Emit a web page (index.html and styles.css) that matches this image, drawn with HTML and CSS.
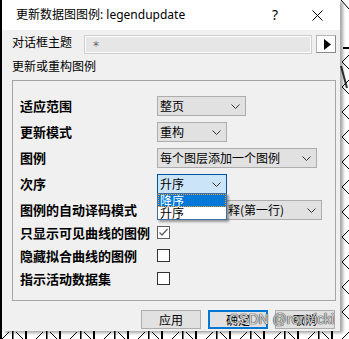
FILE: index.html
```html
<!DOCTYPE html>
<html lang="zh-CN">
<head>
<meta charset="utf-8">
<title>更新数据图图例</title>
<link rel="stylesheet" href="styles.css">
</head>
<body>
<svg class="desk" width="349" height="339" viewBox="0 0 349 339">
  <defs>
    <pattern id="hatch" x="12" y="331" width="34" height="8" patternUnits="userSpaceOnUse">
      <line x1="0.5" y1="0" x2="0.5" y2="8" stroke="#000" stroke-width="2"/>
      <line x1="4" y1="1" x2="11" y2="8" stroke="#000" stroke-width="1"/>
      <line x1="24" y1="8" x2="31" y2="1" stroke="#000" stroke-width="1"/>
      <line x1="14" y1="0" x2="14" y2="8" stroke="#000" stroke-width="2"/>
    </pattern>
  </defs>
  <rect x="0" y="0" width="2" height="339" fill="#000"/>
  <rect x="0" y="331" width="349" height="8" fill="url(#hatch)"/>
  <line x1="343" y1="48" x2="349" y2="48" stroke="#000" stroke-width="2"/>
  <path d="M341 0 L349 9" stroke="#000" fill="none"/>
  <path d="M341 66 L347 88" stroke="#333" stroke-width="2" fill="none"/>
  <path d="M349 55 L342 62 L349 69 M349 80 L342 87 L349 94 M349 105 L342 112 L349 119 M349 130 L342 137 L349 144 M349 155 L342 162 L349 169 M349 180 L342 187 L349 194 M349 205 L342 212 L349 219 M349 230 L342 237 L349 244 M349 255 L342 262 L349 269 M349 280 L342 287 L349 294 M349 305 L342 312 L349 319" stroke="#000" fill="none"/>
</svg>

<div class="window">
  <div class="titlebar">
    <span class="title">更新数据图图例: legendupdate</span>
    <span class="help">?</span>
    <span class="close">
      <svg width="11" height="11" viewBox="0 0 11 11"><path d="M0.5 0.5 L10.5 10.5 M10.5 0.5 L0.5 10.5" stroke="#000" stroke-width="1" fill="none"/></svg>
    </span>
  </div>

  <div class="content">
    <div class="theme-row">
      <span class="theme-label">对话框主题</span>
      <div class="theme-input">*</div>
      <div class="arrow-btn">
        <svg width="7" height="11" viewBox="0 0 7 11"><path d="M0 0 L7 5.5 L0 11 Z" fill="#000"/></svg>
      </div>
    </div>

    <div class="section-title">更新或重构图例</div>

    <div class="group">
      <div class="combo-rows">
        <div class="row">
          <span class="label">适应范围</span>
          <div class="combo w89"><span>整页</span><svg class="chev" width="9" height="5" viewBox="0 0 9 5"><path d="M0.5 0.5 L4.5 4.5 L8.5 0.5" stroke="#333" fill="none"/></svg></div>
        </div>
        <div class="row">
          <span class="label">更新模式</span>
          <div class="combo w70"><span>重构</span><svg class="chev" width="9" height="5" viewBox="0 0 9 5"><path d="M0.5 0.5 L4.5 4.5 L8.5 0.5" stroke="#333" fill="none"/></svg></div>
        </div>
        <div class="row">
          <span class="label">图例</span>
          <div class="combo w160"><span>每个图层添加一个图例</span><svg class="chev" width="9" height="5" viewBox="0 0 9 5"><path d="M0.5 0.5 L4.5 4.5 L8.5 0.5" stroke="#333" fill="none"/></svg></div>
        </div>
        <div class="row">
          <span class="label">次序</span>
          <div class="combo-wrap">
            <div class="combo w70 focused"><span>升序</span><svg class="chev" width="9" height="5" viewBox="0 0 9 5"><path d="M0.5 0.5 L4.5 4.5 L8.5 0.5" stroke="#333" fill="none"/></svg></div>
            <div class="droplist">
              <div class="item selected">降序</div>
              <div class="item">升序</div>
            </div>
          </div>
        </div>
        <div class="row">
          <span class="label">图例的自动译码模式</span>
          <div class="combo w165 covered"><span>释(第一行)</span><svg class="chev" width="9" height="5" viewBox="0 0 9 5"><path d="M0.5 0.5 L4.5 4.5 L8.5 0.5" stroke="#333" fill="none"/></svg></div>
        </div>
      </div>

      <div class="check-rows">
        <div class="check-row">
          <span class="label">只显示可见曲线的图例</span>
          <span class="checkbox checked"><svg width="11" height="11" viewBox="0 0 11 11"><path d="M1.5 5.5 L4 8 L9.5 2" stroke="#5f5f5f" stroke-width="1.3" fill="none"/></svg></span>
        </div>
        <div class="check-row">
          <span class="label">隐藏拟合曲线的图例</span>
          <span class="checkbox"></span>
        </div>
        <div class="check-row">
          <span class="label">指示活动数据集</span>
          <span class="checkbox"></span>
        </div>
      </div>
    </div>

    <div class="buttons">
      <button class="btn">应用</button>
      <button class="btn default">确定</button>
      <button class="btn">取消</button>
    </div>
  </div>
</div>

<div class="watermark">CSDN @ronvicki</div>
</body>
</html>
```

FILE: styles.css
```css
html, body {
  margin: 0;
}

body {
  width: 349px;
  height: 339px;
  overflow: hidden;
  position: relative;
  background: #fff;
  padding-left: 2px;
  box-sizing: border-box;
  font-family: "Noto Sans CJK SC", sans-serif;
  color: #000;
}

.desk {
  position: absolute;
  left: 0;
  top: 0;
  z-index: 0;
}

.window {
  position: relative;
  z-index: 1;
  width: 338px;
  height: 331px;
  background: #f0f0f0;
  box-shadow: 3px 2px 3px rgba(0, 0, 0, 0.35);
}

.titlebar {
  height: 30px;
  background: #fff;
  display: flex;
  align-items: center;
}

.title {
  flex: 1;
  padding-left: 14px;
  font-family: "Noto Sans", "Noto Sans CJK SC", sans-serif;
  font-size: 12px;
  line-height: 16px;
  white-space: nowrap;
}

.help {
  width: 38px;
  text-align: center;
  font-family: "Noto Sans", sans-serif;
  font-size: 14px;
  line-height: 16px;
}

.close {
  width: 46px;
  display: flex;
  justify-content: center;
  align-items: center;
}

.content {
  padding: 0 4px 0 10px;
}

.theme-row {
  margin-top: 5px;
  height: 19px;
  display: flex;
  align-items: flex-start;
}

.theme-label {
  width: 72px;
  flex: none;
  font-size: 12px;
  line-height: 14px;
}

.theme-input {
  width: 228px;
  height: 19px;
  flex: none;
  box-sizing: border-box;
  border: 1px solid #cfcfcf;
  background: #e6e6e6;
  box-shadow: inset 0 0 0 1px #fbfbfb;
  color: #666;
  font-family: "DejaVu Sans", sans-serif;
  font-size: 12px;
  line-height: 20px;
  padding-left: 8px;
}

.arrow-btn {
  margin-left: 4px;
  width: 20px;
  height: 18px;
  flex: none;
  box-sizing: border-box;
  border: 1px solid #b5b5b5;
  border-right-color: #8a8a8a;
  border-bottom-color: #8a8a8a;
  background: #fcfcfc;
  display: flex;
  align-items: center;
  justify-content: center;
  padding-left: 2px;
}

.section-title {
  margin-top: 5px;
  font-size: 12px;
  line-height: 14px;
}

.group {
  margin-top: 7px;
  border: 1px solid #a5a5a5;
  padding: 15px 0 10px 7px;
}

.combo-rows {
  display: flex;
  flex-direction: column;
  gap: 6px;
}

.row {
  display: flex;
  align-items: center;
  height: 20px;
}

.label {
  width: 137px;
  flex: none;
  font-size: 13px;
  font-weight: 700;
  line-height: 16px;
  white-space: nowrap;
}

.combo {
  height: 20px;
  box-sizing: border-box;
  border: 1px solid #adadad;
  background: #e1e1e1;
  display: flex;
  align-items: center;
  justify-content: space-between;
  padding: 0 5px 0 2px;
  font-size: 12px;
  line-height: 16px;
  white-space: nowrap;
  overflow: hidden;
}

.combo.covered {
  padding-left: 70px;
}

.chev {
  flex: none;
}

.w89 { width: 89px; }
.w70 { width: 70px; }
.w160 { width: 160px; }
.w165 { width: 165px; }

.combo.focused {
  background: #cce4f7;
  border-color: #005499;
}

.combo-wrap {
  position: relative;
  z-index: 3;
}

.droplist {
  position: absolute;
  left: 0;
  top: 19px;
  width: 70px;
  box-sizing: border-box;
  border: 1px solid #3d6ea5;
  background: #fff;
  box-shadow: 2px 2px 2px rgba(0, 0, 0, 0.35);
}

.item {
  height: 12px;
  font-size: 12px;
  line-height: 12px;
  padding-left: 2px;
  white-space: nowrap;
}

.item.selected {
  height: 13px;
  line-height: 13px;
  background: #0078d7;
  color: #fff;
  outline: 1px dotted #f0a030;
  outline-offset: -1px;
}

.check-rows {
  margin-top: 1px;
}

.check-row {
  height: 23px;
  display: flex;
  align-items: center;
}

.checkbox {
  width: 13px;
  height: 13px;
  box-sizing: border-box;
  border: 1px solid #333;
  background: #fff;
  display: flex;
  align-items: center;
  justify-content: center;
}

.checkbox.checked {
  border-color: #5f5f5f;
}

.buttons {
  margin-top: 9px;
  display: flex;
  justify-content: flex-end;
  gap: 7px;
  padding-right: 1px;
}

.btn {
  width: 60px;
  height: 19px;
  box-sizing: border-box;
  border: 1px solid #adadad;
  background: #e1e1e1;
  font-family: "Noto Sans CJK SC", sans-serif;
  font-size: 12px;
  line-height: 15px;
  text-align: center;
  padding: 0;
  color: #000;
}

.btn.default {
  border: 2px solid #0078d7;
  line-height: 13px;
}

.watermark {
  position: absolute;
  left: 229px;
  top: 311px;
  z-index: 5;
  font-family: "Liberation Sans", sans-serif;
  font-size: 14px;
  line-height: 16px;
  color: rgba(235, 235, 235, 0.85);
  text-shadow: 0 0 1px #4a4a4a, 0 0 1px #4a4a4a, 0 0 1px #4a4a4a;
  white-space: nowrap;
}
```
